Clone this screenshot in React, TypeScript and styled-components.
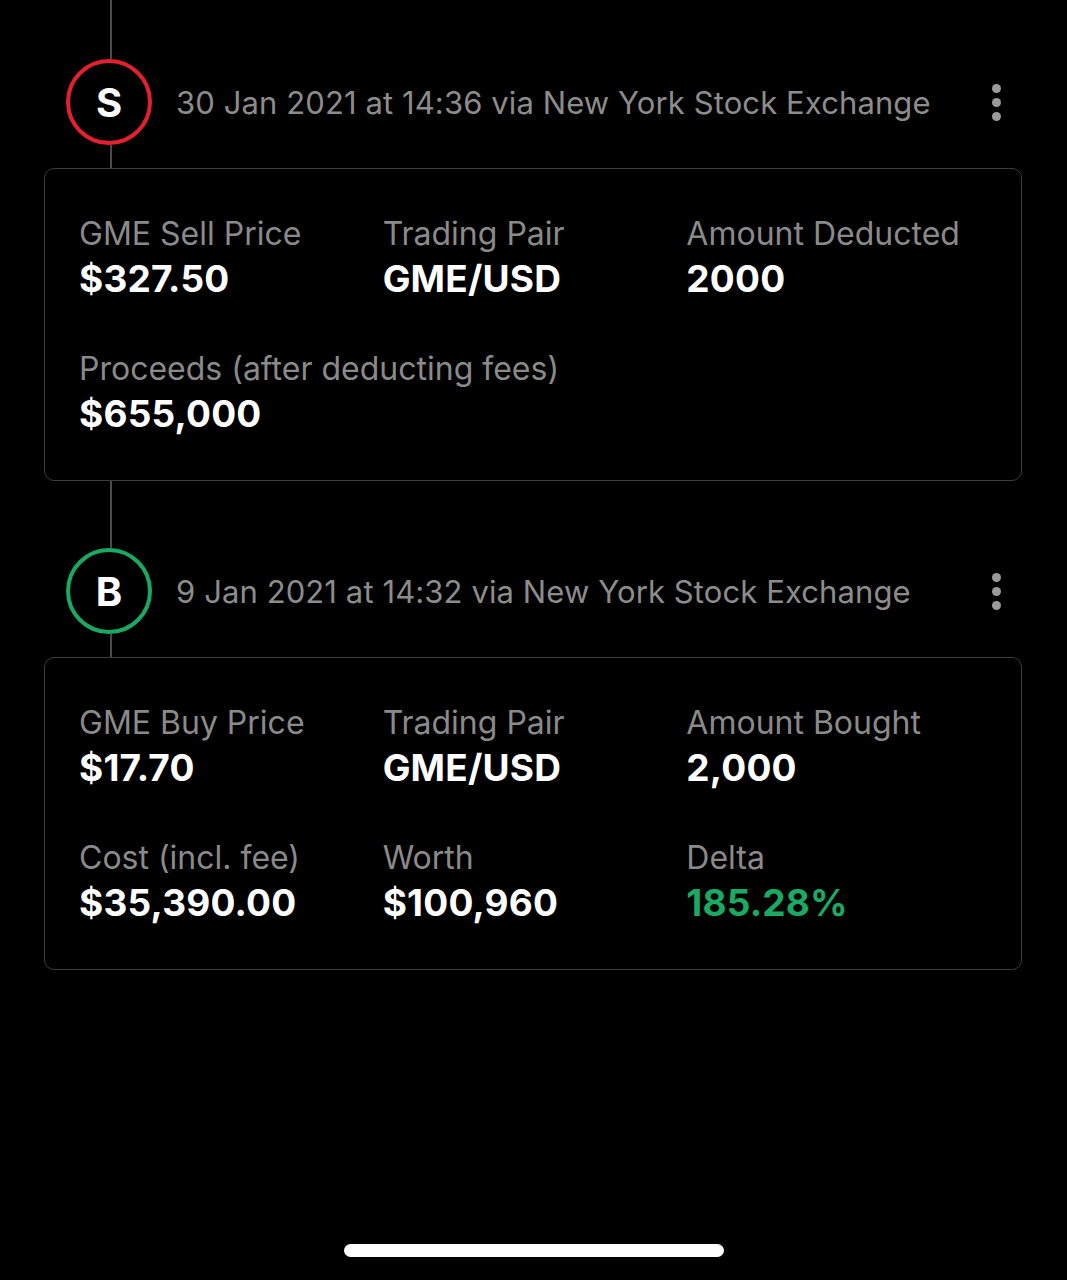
import React from "react";
import styled, { createGlobalStyle } from "styled-components";

const Global = createGlobalStyle`
  html, body { margin: 0; padding: 0; background: #000; }
  body { font-family: Inter, "Noto Sans", sans-serif; color: #fff; }
`;

const Page = styled.div`
  width: 1067px;
  height: 1280px;
  background: #000;
  box-sizing: border-box;
  padding: 0 45px 0 44px;
  display: flex;
  flex-direction: column;
  position: relative;
  overflow: hidden;
`;

const Header = styled.div<{ $top: number }>`
  display: flex;
  align-items: stretch;
  height: ${(p) => p.$top + 86 + 23}px;
`;

const NodeCol = styled.div<{ $top: number }>`
  width: 86px;
  margin-left: 22px;
  display: grid;
  grid-template-rows: ${(p) => p.$top}px 86px 1fr;
  justify-items: center;
`;

const Line = styled.div`
  width: 1.5px;
  background: #4a4a4a;
  margin-left: 4px;
`;

const Circle = styled.div<{ $color: string }>`
  width: 86px;
  height: 86px;
  box-sizing: border-box;
  border-radius: 50%;
  border: 4px solid ${(p) => p.$color};
  display: flex;
  align-items: center;
  justify-content: center;
  font-family: Inter, "Liberation Sans", sans-serif;
  font-weight: 700;
  font-size: 40px;
  color: #fff;
`;

const HeadRow = styled.div<{ $top: number }>`
  flex: 1;
  display: flex;
  align-items: center;
  margin-top: ${(p) => p.$top}px;
  height: 86px;
  padding-left: 24px;
  padding-right: 21px;
`;

const DateText = styled.div`
  flex: 1;
  font-family: Inter, sans-serif;
  font-size: 31px;
  letter-spacing: 0.1px;
  color: #8c8c8c;
`;

const Kebab = styled.div`
  display: flex;
  flex-direction: column;
  gap: 5px;
  span {
    width: 9px;
    height: 9px;
    border-radius: 50%;
    background: #9a9a9a;
  }
`;

const Card = styled.div`
  border: 1px solid #3c3c3c;
  border-radius: 10px;
  height: 313px;
  box-sizing: border-box;
  padding: 45px 31px 0 34px;
  display: grid;
  grid-template-columns: repeat(3, minmax(0, 1fr));
  row-gap: 48px;
  align-content: start;
`;

const Item = styled.div`
  display: flex;
  flex-direction: column;
  white-space: nowrap;
`;

const Label = styled.div`
  font-family: Inter, sans-serif;
  font-size: 32px;
  line-height: 40px;
  color: #8a8a8a;
`;

const Value = styled.div<{ $green?: boolean }>`
  margin-top: 3px;
  font-family: Inter, "Liberation Sans", sans-serif;
  font-weight: 700;
  font-size: 37px;
  line-height: 44px;
  letter-spacing: 0.2px;
  color: ${(p) => (p.$green ? "#1aaa63" : "#fff")};
`;

const HomeBar = styled.div`
  position: absolute;
  left: 344px;
  top: 1244px;
  width: 380px;
  height: 13px;
  border-radius: 7px;
  background: #fff;
`;

type Field = { label: string; value: string; green?: boolean };

function Entry({
  top,
  letter,
  color,
  date,
  fields,
}: {
  top: number;
  letter: string;
  color: string;
  date: string;
  fields: Field[];
}) {
  return (
    <>
      <Header $top={top}>
        <NodeCol $top={top}>
          <Line />
          <Circle $color={color}>{letter}</Circle>
          <Line />
        </NodeCol>
        <HeadRow $top={top}>
          <DateText>{date}</DateText>
          <Kebab>
            <span />
            <span />
            <span />
          </Kebab>
        </HeadRow>
      </Header>
      <Card>
        {fields.map((f) => (
          <Item key={f.label}>
            <Label>{f.label}</Label>
            <Value $green={f.green}>{f.value}</Value>
          </Item>
        ))}
      </Card>
    </>
  );
}

export default function App() {
  return (
    <Page>
      <Global />
      <Entry
        top={59}
        letter="S"
        color="#e2202f"
        date="30 Jan 2021 at 14:36 via New York Stock Exchange"
        fields={[
          { label: "GME Sell Price", value: "$327.50" },
          { label: "Trading Pair", value: "GME/USD" },
          { label: "Amount Deducted", value: "2000" },
          { label: "Proceeds (after deducting fees)", value: "$655,000" },
        ]}
      />
      <Entry
        top={67}
        letter="B"
        color="#1aa863"
        date="9 Jan 2021 at 14:32 via New York Stock Exchange"
        fields={[
          { label: "GME Buy Price", value: "$17.70" },
          { label: "Trading Pair", value: "GME/USD" },
          { label: "Amount Bought", value: "2,000" },
          { label: "Cost (incl. fee)", value: "$35,390.00" },
          { label: "Worth", value: "$100,960" },
          { label: "Delta", value: "185.28%", green: true },
        ]}
      />
      <HomeBar />
    </Page>
  );
}
